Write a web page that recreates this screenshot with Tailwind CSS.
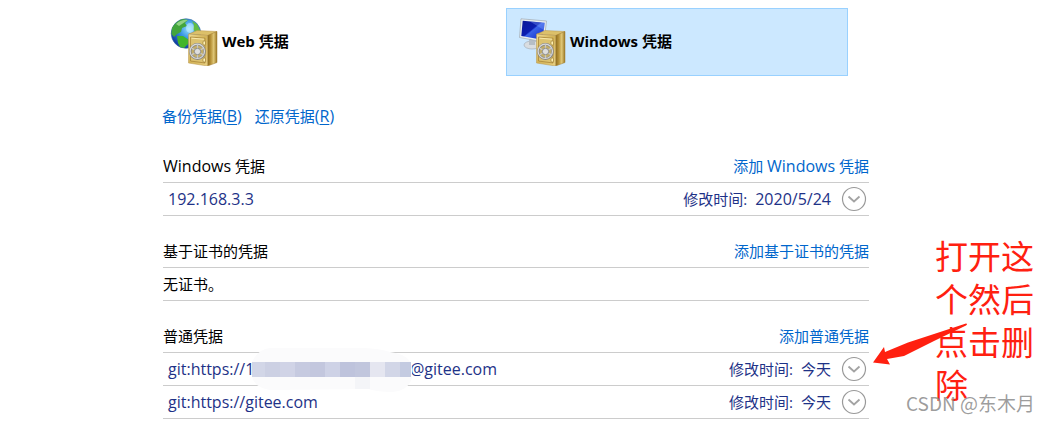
<!DOCTYPE html>
<html lang="zh-CN">
<head>
<meta charset="utf-8">
<meta name="viewport" content="width=device-width, initial-scale=1">
<title>凭据管理器</title>
<script src="https://cdn.jsdelivr.net/npm/@tailwindcss/browser@4"></script>
</head>
<body class="relative flex overflow-x-hidden bg-white font-['Open_Sans','Noto_Sans_CJK_SC',sans-serif] text-[15px] leading-5 text-black">

<svg class="absolute size-0" aria-hidden="true">
  <defs>
    <linearGradient id="gold" x1="0" y1="0" x2="1" y2="1"><stop offset="0" stop-color="#efdc94"/><stop offset=".5" stop-color="#d3b356"/><stop offset="1" stop-color="#e8d083"/></linearGradient>
    <linearGradient id="side" x1="0" y1="0" x2="1" y2="0"><stop offset="0" stop-color="#8a6a1c"/><stop offset=".35" stop-color="#b8933a"/><stop offset=".65" stop-color="#e0c777"/><stop offset="1" stop-color="#9a7724"/></linearGradient>
    <radialGradient id="sea" cx=".6" cy=".35" r=".7"><stop offset="0" stop-color="#9be2ff"/><stop offset=".4" stop-color="#3f9ce6"/><stop offset="1" stop-color="#0b2f9a"/></radialGradient>
    <linearGradient id="screen" x1="0" y1="0" x2="1" y2="1"><stop offset="0" stop-color="#0a1696"/><stop offset=".45" stop-color="#0b1cb0"/><stop offset=".5" stop-color="#3a62e8"/><stop offset="1" stop-color="#0d25c4"/></linearGradient>
    <symbol id="safe" viewBox="0 0 48 48">
      <path d="M19 16 L27 12.500 L47 13.500 L39 17.500 Z" fill="#dcc06a" stroke="#b8954a" stroke-width=".5"/>
      <path d="M37.500 17.500 L47 13.500 V44.500 L37.500 48 Z" fill="url(#side)" stroke="#a07c30" stroke-width=".5"/>
      <path d="M18.500 16 L37.500 17.500 V48 L18.500 45 Z" fill="url(#gold)" stroke="#b8954a" stroke-width=".5"/>
      <path d="M20.500 19 L35 20.200 V45 L20.500 43 Z" fill="#dcc270" stroke="#a9873a" stroke-width=".8"/>
      <path d="M21.500 20.200 L34 21.200" stroke="#fff3b8" stroke-width=".8"/>
      <rect x="33" y="23" width="2.500" height="4" rx="1" fill="#fff0b0" stroke="#80601c" stroke-width=".5"/>
      <rect x="33" y="40" width="2.500" height="4" rx="1" fill="#fff0b0" stroke="#80601c" stroke-width=".5"/>
      <circle cx="27.500" cy="33.500" r="7.200" fill="#c2ad6a" stroke="#858585" stroke-width="2.400"/>
      <circle cx="27.300" cy="33.300" r="7.200" fill="none" stroke="#d9d9d9" stroke-width="1.200"/>
      <path d="M27.500 27 V40 M21.800 30.200 L33.200 36.800 M33.200 30.200 L21.800 36.800" stroke="#c8c8c8" stroke-width="1.300"/>
      <circle cx="27.500" cy="33.500" r="3.200" fill="#dedede" stroke="#7d7d7d" stroke-width=".8"/>
    </symbol>
    <symbol id="expand" viewBox="0 0 26 26">
      <circle cx="13" cy="13" r="11.500" fill="none" stroke="#999999" stroke-width="1.200"/>
      <path d="M7.500 10.500 L13 15.500 L18.500 10.500" fill="none" stroke="#a3a3a3" stroke-width="1.800"/>
    </symbol>
  </defs>
</svg>

<main class="min-w-0 flex-1 pl-[158px] pt-2">
  <nav class="mr-[21px] grid grid-cols-2 gap-[6px] font-bold">
    <button type="button" class="flex h-[68px] items-center border border-transparent pl-[11px] text-left">
      <svg class="size-12 shrink-0" viewBox="0 0 48 48" aria-hidden="true">
        <circle cx="16" cy="15.500" r="14.800" fill="url(#sea)" stroke="#3b6f9f" stroke-width=".6"/>
        <path d="M2 10 Q6 3 13 1 L18 2 L15 5 L17 8 L12 10 L11 14 L7 16 L4 19 L1.500 16 Z" fill="#43a53c"/>
        <path d="M7 18 L13 18 L19 22 L18 26 L14 30 L10 29 L8 25 Z" fill="#42b52c"/>
        <path d="M22 3 L27 6 L30 12 L30 18 L26 15 L23 11 L24 7 Z" fill="#62bd43"/>
        <path d="M6 6 Q12 1 18 2 L15 4 L9 8 Z" fill="#b1e5a2" opacity=".7"/>
        <ellipse cx="20" cy="10" rx="4" ry="5" fill="#d0f5ff" opacity=".5"/>
        <use href="#safe"/>
      </svg>
      <span class="ml-[4px] pb-[2px]">Web 凭据</span>
    </button>
    <button type="button" class="flex h-[68px] items-center border border-[#99d1ff] bg-[#cce8ff] pl-[11px] text-left">
      <svg class="size-12 shrink-0" viewBox="0 0 48 48" aria-hidden="true">
        <ellipse cx="14" cy="27" rx="8" ry="4" fill="#d9dde1" stroke="#a6afb7" stroke-width=".7"/>
        <path d="M11 20 L17 21 L17 27 L11 27 Z" fill="#b6bec6"/>
        <path d="M3 .800 L28.500 3 L26 24 L1.500 19.500 Z" fill="#e8edf0" stroke="#9fa9b2" stroke-width=".7"/>
        <path d="M4.700 2.700 L26.700 4.800 L24.600 21.800 L3.300 18 Z" fill="url(#screen)"/>
        <path d="M12 3.500 L26.700 4.800 L25.800 12 Z" fill="#88a9ff" opacity=".35"/>
        <use href="#safe"/>
      </svg>
      <span class="ml-[4px] pb-[2px]">Windows 凭据</span>
    </button>
  </nav>

  <div class="mt-[30px] flex gap-[13px] pl-[4px] text-[#0066cc]">
    <a href="#backup">备份凭据<span class="text-base leading-5">(<u class="underline-offset-2">B</u>)</span></a>
    <a href="#restore">还原凭据<span class="text-base leading-5">(<u class="underline-offset-2">R</u>)</span></a>
  </div>

  <div class="mt-6 flex flex-col gap-[19px] pl-[5px]">
    <section>
      <header class="flex h-[33px] items-center justify-between border-b border-[#cccccc]">
        <h2><span class="text-base leading-5">Windows</span> 凭据</h2>
        <a href="#add-windows" class="text-[#0066cc]">添加 <span class="text-base leading-5">Windows</span> 凭据</a>
      </header>
      <div class="flex h-[33px] items-center border-b border-[#cccccc] pl-[5px] pr-[2px] text-[#1e3287]">
        <span class="flex-1 text-base leading-5">192.168.3.3</span>
        <span>修改时间:</span><span class="ml-2 text-base leading-5">2020/5/24</span>
        <button type="button" aria-label="展开 192.168.3.3" class="ml-[10px]"><svg class="size-[26px]" aria-hidden="true"><use href="#expand"/></svg></button>
      </div>
    </section>

    <section>
      <header class="flex h-[33px] items-center justify-between border-b border-[#cccccc]">
        <h2>基于证书的凭据</h2>
        <a href="#add-certificate" class="text-[#0066cc]">添加基于证书的凭据</a>
      </header>
      <p class="flex h-[33px] items-center border-b border-[#cccccc]">无证书。</p>
    </section>

    <section>
      <header class="flex h-[33px] items-center justify-between border-b border-[#cccccc]">
        <h2>普通凭据</h2>
        <a href="#add-generic" class="text-[#0066cc]">添加普通凭据</a>
      </header>
      <div class="relative flex h-[33px] items-center border-b border-[#cccccc] pl-[5px] pr-[2px] text-[#1e3287]">
        <span class="w-[242px] text-base leading-5">git:https://1</span>
        <span class="flex-1 text-base leading-5">@gitee.com</span>
        <!-- Mosaic hiding the account name -->
        <svg class="absolute -top-[5px] left-[87px] h-[45px] w-[163px]" viewBox="0 0 163 45" shape-rendering="crispEdges" aria-hidden="true">
          <path d="M2 14 Q8 1 20 0 H110 Q128 0 140 4 Q162 7 162 21 V30 Q158 43 142 44 Q128 44 118 41 L20 42 Q5 40 2 29 Z" fill="#fbfbfc" shape-rendering="auto"/>
          <path d="M2 14h13v15h-13z" fill="#d2d6e7"/><path d="M15 14h15v15h-15z" fill="#ccd0e3"/><path d="M30 14h15v15h-15z" fill="#d0d3e6"/><path d="M45 14h15v15h-15z" fill="#c6cae0"/><path d="M60 14h15v15h-15z" fill="#c3c7de"/><path d="M75 14h15v15h-15z" fill="#ced2e6"/><path d="M90 14h15v15h-15z" fill="#bec3dc"/><path d="M105 14h15v15h-15z" fill="#c1c6dd"/><path d="M120 14h15v15h-15z" fill="#e5e6f0"/><path d="M135 14h15v15h-15z" fill="#d2d6e7"/><path d="M150 14h11v15h-11z" fill="#c4cbe1"/>
          <path d="M105 29h15v12h-15z" fill="#f4f5f8"/>
        </svg>
        <span>修改时间:</span><span class="ml-2">今天</span>
        <button type="button" aria-label="展开此凭据" class="ml-[10px]"><svg class="size-[26px]" aria-hidden="true"><use href="#expand"/></svg></button>
      </div>
      <div class="flex h-[33px] items-center border-b border-[#cccccc] pl-[5px] pr-[2px] text-[#1e3287]">
        <span class="flex-1 text-base leading-5">git:https://gitee.com</span>
        <span>修改时间:</span><span class="ml-2">今天</span>
        <button type="button" aria-label="展开 git:https://gitee.com" class="ml-[10px]"><svg class="size-[26px]" aria-hidden="true"><use href="#expand"/></svg></button>
      </div>
    </section>
  </div>
</main>

<aside class="relative w-[179px] shrink-0 pl-[66px] pr-[14px] pt-[235px]">
  <p class="text-[33px] leading-[43px] text-[#ff2010]">打开这个然后点击删除</p>
  <svg class="absolute left-[3px] top-[322px] h-[44px] w-[96px]" viewBox="0 0 96 44" aria-hidden="true">
    <path d="M94 1.500 Q96 2 94 3.500 L62 19 L32 34 L15 37 L18 42.500 L1 40.500 L12 25 L13 30 L36 20.500 L62 12 Z" fill="#ff2010"/>
  </svg>
</aside>
<p class="absolute right-[13px] top-[391px] whitespace-nowrap font-['Noto_Sans_CJK_SC',sans-serif] text-[19px] leading-6 text-[#8c8c8c]/85">CSDN @东木月</p>
</body>
</html>
